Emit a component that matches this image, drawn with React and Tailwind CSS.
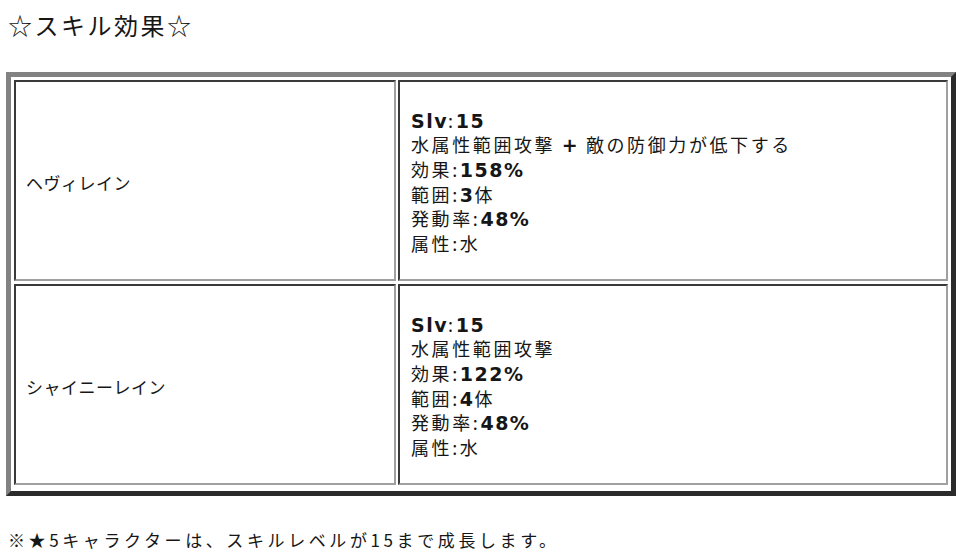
import React from "react";

const B = ({ children }) => (
  <span className="font-['DejaVu_Sans','Noto_Sans_CJK_JP',sans-serif] font-bold tracking-[1.5px] text-[19px]">{children}</span>
);

const L = ({ children }) => <div className="h-[24.6px] leading-[24.6px] whitespace-nowrap">{children}</div>;

function SkillCell({ desc, effect, range, rate }) {
  return (
    <div className="flex flex-col justify-center pt-[2px] pl-[11px] border-2 border-t-[#3a3a3a] border-l-[#3a3a3a] border-r-[#a0a0a0] border-b-[#a0a0a0] text-[18px] tracking-[2.6px]">
      <L>
        <B>Slv</B>:<B>15</B>
      </L>
      <L>{desc}</L>
      <L>
        効果:<B>{effect}</B>
      </L>
      <L>
        範囲:<B>{range}</B>体
      </L>
      <L>
        発動率:<B>{rate}</B>
      </L>
      <L>属性:水</L>
    </div>
  );
}

function NameCell({ name }) {
  return (
    <div className="flex items-center pt-[5px] pl-[10px] border-2 border-t-[#3a3a3a] border-l-[#3a3a3a] border-r-[#a0a0a0] border-b-[#a0a0a0] text-[17px] leading-[24px] tracking-[0.5px]">
      {name}
    </div>
  );
}

export default function App() {
  return (
    <div className="w-[960px] h-[556px] overflow-hidden bg-white text-[#161616] font-['Noto_Sans_CJK_JP',sans-serif]">
      <div className="pl-[8px] pt-[7px] h-[43px] leading-[36px] text-[24px] tracking-[2.5px]">
        ☆スキル効果☆
      </div>
      <div className="mt-[29px] ml-[6px] w-[950px] h-[424px] border-[5px] border-t-[#828282] border-l-[#828282] border-r-[#2b2b2b] border-b-[#2b2b2b] pt-[3px] pl-[3px] pr-[3px] pb-[6px] grid grid-cols-[382px_550px] grid-rows-[201px_201px] gap-x-[2px] gap-y-[3px]">
        <NameCell name="ヘヴィレイン" />
        <SkillCell
          desc={
            <>
              水属性範囲攻撃 <B>+</B> 敵の防御力が低下する
            </>
          }
          effect="158%"
          range="3"
          rate="48%"
        />
        <NameCell name="シャイニーレイン" />
        <SkillCell desc="水属性範囲攻撃" effect="122%" range="4" rate="48%" />
      </div>
      <div className="mt-[32px] pl-[8px] text-[17px] leading-[24px] tracking-[3.6px]">
        ※★5キャラクターは、スキルレベルが15まで成長します。
      </div>
    </div>
  );
}
